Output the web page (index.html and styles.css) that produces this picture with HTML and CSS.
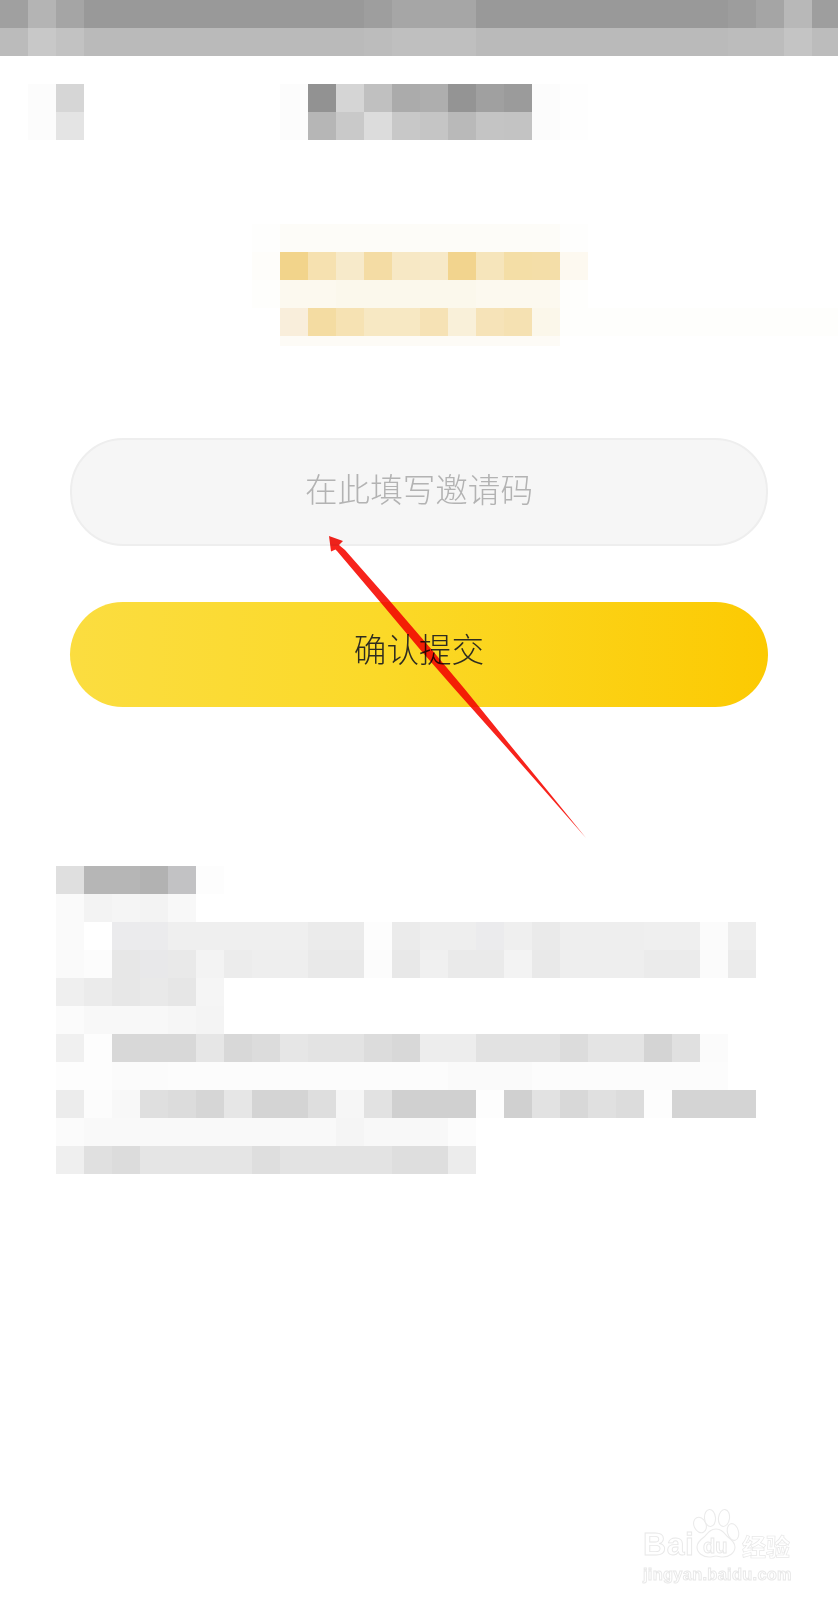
FILE: index.html
```html
<!DOCTYPE html>
<html lang="zh-CN">
<head>
<meta charset="utf-8">
<title>填写邀请码</title>
<link rel="stylesheet" href="styles.css">
</head>
<body>
<div class="page">
  <header class="status" aria-hidden="true">
    <div class="px s0"></div>
    <div class="px s1"></div>
  </header>
  <div class="title" aria-hidden="true">
    <div class="px t0"></div>
    <div class="px t1"></div>
  </div>
  <div class="promo" aria-hidden="true">
    <div class="px p0"></div>
    <div class="px p1"></div>
    <div class="px p2"></div>
    <div class="px p3"></div>
    <div class="px p4"></div>
  </div>
  <form class="form">
    <div class="field">在此填写邀请码</div>
    <div class="submit"><span>确认提交</span></div>
  </form>
  <section class="rules" aria-hidden="true">
    <div class="px r0"></div>
    <div class="px r1"></div>
    <div class="px r2"></div>
    <div class="px r3"></div>
    <div class="px r4"></div>
    <div class="px r5"></div>
    <div class="px r6"></div>
    <div class="px r7"></div>
    <div class="px r8"></div>
    <div class="px r9"></div>
    <div class="px r10"></div>
  </section>

  <svg class="arrow" viewBox="0 0 838 1600" aria-hidden="true">
    <polygon points="329,536 343,541 339,545 345,550 389,600 432,650 465.5,690 506,740 547,790 586,838 544,790 500,740 455.5,690 420.5,650 378.5,600 337,551 335.5,549.5 331,551.5"/>
  </svg>

  <svg class="mark" viewBox="0 0 218 110" aria-hidden="true">
    <g class="mark-shape">
      <ellipse cx="80" cy="35" rx="6" ry="8" transform="rotate(-25 80 35)"/>
      <ellipse cx="90" cy="28" rx="5.5" ry="8.5" transform="rotate(-5 90 28)"/>
      <ellipse cx="104" cy="28" rx="5.5" ry="8.5" transform="rotate(8 104 28)"/>
      <ellipse cx="113" cy="42" rx="5.5" ry="8.5" transform="rotate(-15 113 42)"/>
      <path d="M96 39c6 0 8 4 12 8 4 3 7 6 7 10 0 6-6 10-12 10-3 0-5-1-7-1s-4 1-7 1c-6 0-12-4-12-10 0-4 3-7 7-10 4-4 6-8 12-8z"/>
    </g>
    <text class="mark-bai" x="23" y="65">Bai</text>
    <text class="mark-du" x="83" y="63">du</text>
    <text class="mark-cn" x="122" y="66">经验</text>
    <text class="mark-url" x="23" y="90">jingyan.baidu.com</text>
  </svg>
</div>
</body>
</html>
```
FILE: styles.css
```css
* { box-sizing: border-box; }
html, body { margin: 0; background: #fff; }
.page {
  position: relative;
  width: 838px;
  height: 1600px;
  overflow: hidden;
  background: #fff;
  font-family: "Noto Sans CJK SC", "Liberation Sans", sans-serif;
}

/* mosaic rows: each row is 28px tall, made of 28px cells */
.px { height: 28px; }
.title, .promo, .rules { filter: blur(0.5px); }

.s0 { background: linear-gradient(90deg,#a0a0a0 0 28px,#b4b4b4 0 56px,#a5a5a5 0 84px,#999 0 364px,#9e9e9e 0 392px,#a6a6a6 0 476px,#999 0 728px,#9d9d9d 0 756px,#a5a5a5 0 784px,#b8b8b8 0 812px,#9e9e9e 0 840px); }
.s1 { background: linear-gradient(90deg,#bbb 0 28px,#c8c8c8 0 56px,#c2c2c2 0 84px,#bababa 0 364px,#bcbcbc 0 392px,#bfbfbf 0 476px,#bababa 0 728px,#bcbcbc 0 784px,#c4c4c4 0 812px,#bcbcbc 0 840px); }

.title { margin-top: 28px; }
.t0 { background: linear-gradient(90deg,#fff 0 28px,#fcfcfc 0 56px,#d6d6d6 0 84px,#fff 0 280px,#fcfcfc 0 308px,#929292 0 336px,#d5d5d5 0 364px,#c0c0c0 0 392px,#ababab 0 420px,#aeaeae 0 448px,#949494 0 476px,#a0a0a0 0 504px,#9b9b9b 0 532px,#fcfcfc 0 560px,#fefefe 0 588px,#fff 0); }
.t1 { background: linear-gradient(90deg,#fff 0 28px,#fcfcfc 0 56px,#e4e4e4 0 84px,#fff 0 280px,#fcfcfc 0 308px,#b6b6b6 0 336px,#c9c9c9 0 364px,#dcdcdc 0 392px,#c8c8c8 0 420px,#c5c5c5 0 448px,#b9b9b9 0 476px,#c4c4c4 0 504px,#c3c3c3 0 532px,#fcfcfc 0 560px,#fefefe 0 588px,#fff 0); }

.promo { margin-top: 84px; }
.p0 { background: linear-gradient(90deg,#fff 0 252px,#fefefd 0 280px,#fdfcf8 0 560px,#fefefd 0 588px,#fff 0); }
.p1 { background: linear-gradient(90deg,#fff 0 252px,#fefdfa 0 280px,#f2d48b 0 308px,#f6e1b0 0 336px,#f7eaca 0 364px,#f4dca4 0 392px,#f7e8c5 0 420px,#f7e9c8 0 448px,#f2d48e 0 476px,#f6e5bb 0 504px,#f4dea6 0 532px,#f4dea8 0 560px,#fdf9f0 0 588px,#fff 0); }
.p2 { background: linear-gradient(90deg,#fff 0 252px,#fefefc 0 280px,#fcf9ef 0 336px,#fbf8ec 0 476px,#fcf9ef 0 560px,#fefefc 0 588px,#fff 0); }
.p3 { background: linear-gradient(90deg,#fff 0 280px,#f9eedb 0 308px,#f4dca2 0 336px,#f6e2b3 0 364px,#f7e8c3 0 420px,#f6e2b5 0 448px,#f9f0d9 0 476px,#f6e3b8 0 504px,#f5e1b2 0 532px,#fbf7ea 0 560px,#fefefc 0); }
.p4 { height: 10px; background: linear-gradient(90deg,#fff 0 280px,#fdfbf6 0 560px,#fff 0); }

.form {
  display: flex;
  flex-direction: column;
  gap: 56px;
  margin-top: 92px;
  padding-left: 70px;
  width: 768px;
}
.field, .submit {
  display: flex;
  align-items: center;
  justify-content: center;
  font-size: 32.6px;
  line-height: 1;
  border-radius: 53px;
  font-weight: 300;
}
.field {
  height: 108px;
  padding-bottom: 8px;
  color: #b3b3b3;
  background: #f6f6f6;
  border: 2px solid #eeeeee;
}
.submit {
  height: 105px;
  padding-bottom: 12px;
  color: #2e2c20;
  background: linear-gradient(90deg,#fbdd40 0%,#fbd928 45%,#fcca02 100%);
}

.rules { margin-top: 159px; }
.r0 { background: linear-gradient(90deg,#fff 0 56px,#dfdfdf 0 84px,#b6b6b6 0 140px,#b2b2b2 0 168px,#c2c2c4 0 196px,#fdfdfd 0 224px,#fff 0); }
.r1 { background: linear-gradient(90deg,#fff 0 56px,#fafafa 0 84px,#f3f3f3 0 112px,#f5f5f5 0 140px,#f3f3f3 0 168px,#f8f8f8 0 196px,#fff 0); }
.r2 { background: linear-gradient(90deg,#fff 0 56px,#fafafa 0 84px,#fff 0 112px,#ebebed 0 168px,#efefef 0 308px,#ebebeb 0 364px,#fdfdfd 0 392px,#ebebeb 0 420px,#eee 0 476px,#ebebed 0 504px,#efefef 0 532px,#eaeaea 0 560px,#eee 0 644px,#efefef 0 700px,#fbfbfb 0 728px,#eee 0 756px,#fff 0); }
.r3 { background: linear-gradient(90deg,#fff 0 56px,#fafafa 0 84px,#fcfcfc 0 112px,#e7e7e7 0 140px,#e8e8ea 0 168px,#e9e9e9 0 196px,#f3f3f3 0 224px,#ececec 0 252px,#eee 0 308px,#e9e9e9 0 364px,#fcfcfc 0 392px,#e8e8e8 0 420px,#f0f0f0 0 448px,#eaeaea 0 504px,#f3f3f3 0 532px,#e9e9e9 0 560px,#eee 0 644px,#ebebeb 0 700px,#fbfbfb 0 728px,#ebebeb 0 756px,#fff 0); }
.r4 { background: linear-gradient(90deg,#fff 0 56px,#efefef 0 84px,#ebebeb 0 112px,#e7e7e7 0 140px,#e9e9e9 0 168px,#e6e6e6 0 196px,#f5f5f5 0 224px,#fff 0); }
.r5 { background: linear-gradient(90deg,#fff 0 56px,#fbfbfb 0 84px,#f8f8f8 0 168px,#f6f6f6 0 196px,#f4f4f4 0 224px,#fff 0); }
.r6 { background: linear-gradient(90deg,#fff 0 56px,#f0f0f0 0 84px,#fdfdfd 0 112px,#d8d8d8 0 196px,#e6e6e6 0 224px,#d8d8d8 0 252px,#dcdcdc 0 280px,#e6e6e6 0 308px,#e3e3e3 0 364px,#dcdcdc 0 392px,#d8d8d8 0 420px,#ededed 0 476px,#e2e2e2 0 560px,#dcdcdc 0 588px,#e4e4e4 0 644px,#d4d4d4 0 672px,#e0e0e0 0 700px,#fbfbfb 0 728px,#fff 0); }
.r7 { background: linear-gradient(90deg,#fff 0 56px,#fdfdfd 0 112px,#fbfbfb 0 168px,#fcfcfc 0 448px,#fafafa 0 532px,#fcfcfc 0 728px,#fff 0); }
.r8 { background: linear-gradient(90deg,#fff 0 56px,#ececec 0 84px,#fcfcfc 0 112px,#f8f8f8 0 140px,#dfdfdf 0 168px,#dcdcdc 0 196px,#d6d6d6 0 224px,#e6e6e6 0 252px,#d4d4d4 0 308px,#dedede 0 336px,#f6f6f6 0 364px,#e2e2e2 0 392px,#d0d0d0 0 476px,#fdfdfd 0 504px,#d0d0d0 0 532px,#e2e2e2 0 560px,#d8d8d8 0 588px,#e0e0e0 0 616px,#dcdcdc 0 644px,#fdfdfd 0 672px,#d4d4d4 0 756px,#fff 0); }
.r9 { background: linear-gradient(90deg,#fff 0 56px,#fbfbfb 0 84px,#f9f9f9 0 336px,#f5f5f5 0 364px,#f8f8f8 0 448px,#fcfcfc 0 476px,#fff 0); }
.r10 { background: linear-gradient(90deg,#fff 0 56px,#efefef 0 84px,#e0e0e0 0 112px,#dcdcdc 0 140px,#e5e5e5 0 252px,#dedede 0 280px,#e3e3e3 0 392px,#dedede 0 448px,#ececec 0 476px,#fff 0); }

/* red annotation arrow drawn over the form */
.arrow {
  position: absolute;
  top: 0;
  left: 0;
  width: 838px;
  height: 1600px;
  mix-blend-mode: multiply;
  pointer-events: none;
}
.arrow polygon { fill: #f7231c; }

/* Baidu Jingyan watermark */
.mark {
  position: absolute;
  left: 620px;
  top: 1490px;
  width: 218px;
  height: 110px;
  pointer-events: none;
}
.mark-shape ellipse, .mark-shape path { fill: #fff; stroke: #ebebeb; stroke-width: 1.1; }
.mark text {
  fill: #fff;
  stroke: #e8e8e8;
  stroke-width: 0.9;
  font-family: "Liberation Sans", sans-serif;
  font-weight: 700;
}
.mark-bai { font-size: 32px; letter-spacing: 0.6px; }
.mark-du { font-size: 20px; }
.mark .mark-cn { font-size: 24px; font-family: "Noto Sans CJK SC", sans-serif; stroke-width: 0.7; }
.mark-url { font-size: 16.4px; letter-spacing: 0.3px; }
```
